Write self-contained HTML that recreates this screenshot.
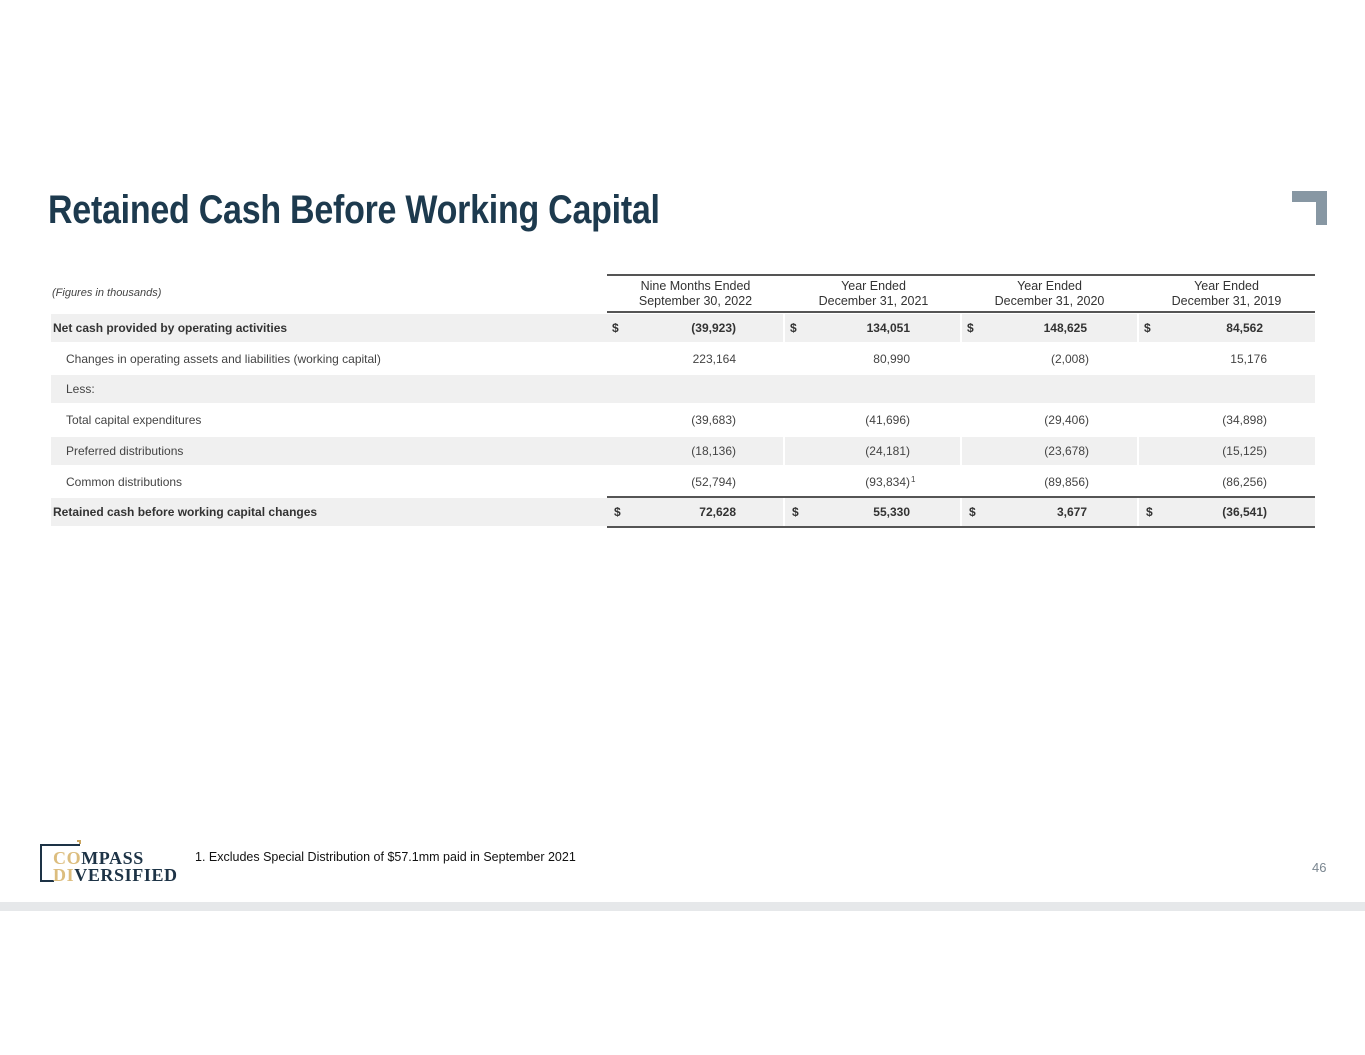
<!DOCTYPE html>
<html><head><meta charset="utf-8"><style>
body{margin:0;width:1365px;height:1055px;background:#fff;position:relative;overflow:hidden;font-family:"Liberation Sans",sans-serif;}
.a{position:absolute;}
.title{left:48px;top:188px;font-weight:bold;font-size:40px;color:#1d3a4e;letter-spacing:-0.3px;white-space:nowrap;transform:scaleX(0.85);transform-origin:0 0;}
.row{position:absolute;left:51px;width:1264px;height:28px;}
.sh .c{background:#f0f0f0;}
.c{position:absolute;top:0;height:28px;line-height:28px;font-size:12px;color:#444;}
.lab{left:0;width:554px;}
.v{text-align:right;box-sizing:border-box;}
.b{font-weight:bold;color:#333;}
.d{position:absolute;left:5px;}
.hd{position:absolute;top:279px;text-align:center;font-size:12.5px;color:#333;line-height:15px;width:177px;}
</style></head><body>
<div class="a title">Retained Cash Before Working Capital</div>
<div class="a" style="left:1292px;top:191px;width:35px;height:11px;background:#8797a3"></div>
<div class="a" style="left:1316px;top:191px;width:11px;height:34px;background:#8797a3"></div>

<div class="a" style="left:607px;top:274px;width:708px;height:1.5px;background:#555"></div>
<div class="a" style="left:52px;top:287px;font-size:11px;font-style:italic;color:#444">(Figures in thousands)</div>
<div class="hd" style="left:607px">Nine Months Ended<br>September 30, 2022</div>
<div class="hd" style="left:785px">Year Ended<br>December 31, 2021</div>
<div class="hd" style="left:961px">Year Ended<br>December 31, 2020</div>
<div class="hd" style="left:1138px">Year Ended<br>December 31, 2019</div>
<div class="a" style="left:607px;top:311px;width:708px;height:1.5px;background:#555"></div>

<div class="row sh" style="top:314px">
<div class="c lab b" style="padding-left:2px">Net cash provided by operating activities</div>
<div class="c v b" style="left:556px;width:176px;padding-right:47px"><span class="d">$</span>(39,923)</div>
<div class="c v b" style="left:734px;width:175px;padding-right:50px"><span class="d">$</span>134,051</div>
<div class="c v b" style="left:911px;width:175px;padding-right:50px"><span class="d">$</span>148,625</div>
<div class="c v b" style="left:1088px;width:176px;padding-right:52px"><span class="d">$</span>84,562</div>
</div>
<div class="row" style="top:345px">
<div class="c lab" style="padding-left:15px">Changes in operating assets and liabilities (working capital)</div>
<div class="c v" style="left:556px;width:176px;padding-right:47px">223,164</div>
<div class="c v" style="left:734px;width:175px;padding-right:50px">80,990</div>
<div class="c v" style="left:911px;width:175px;padding-right:48px">(2,008)</div>
<div class="c v" style="left:1088px;width:176px;padding-right:48px">15,176</div>
</div>
<div class="row sh" style="top:375px">
<div class="c lab" style="padding-left:15px">Less:</div>
<div class="c" style="left:556px;width:708px"></div>
</div>
<div class="row" style="top:406px">
<div class="c lab" style="padding-left:15px">Total capital expenditures</div>
<div class="c v" style="left:556px;width:176px;padding-right:47px">(39,683)</div>
<div class="c v" style="left:734px;width:175px;padding-right:50px">(41,696)</div>
<div class="c v" style="left:911px;width:175px;padding-right:48px">(29,406)</div>
<div class="c v" style="left:1088px;width:176px;padding-right:48px">(34,898)</div>
</div>
<div class="row sh" style="top:437px">
<div class="c lab" style="padding-left:15px">Preferred distributions</div>
<div class="c v" style="left:556px;width:176px;padding-right:47px">(18,136)</div>
<div class="c v" style="left:734px;width:175px;padding-right:50px">(24,181)</div>
<div class="c v" style="left:911px;width:175px;padding-right:48px">(23,678)</div>
<div class="c v" style="left:1088px;width:176px;padding-right:48px">(15,125)</div>
</div>
<div class="row" style="top:468px">
<div class="c lab" style="padding-left:15px">Common distributions</div>
<div class="c v" style="left:556px;width:176px;padding-right:47px">(52,794)</div>
<div class="c v" style="left:734px;width:175px;padding-right:50px">(93,834)<span style="position:absolute;font-size:8px;line-height:8px;top:8px;margin-left:1px">1</span></div>
<div class="c v" style="left:911px;width:175px;padding-right:48px">(89,856)</div>
<div class="c v" style="left:1088px;width:176px;padding-right:48px">(86,256)</div>
</div>
<div class="a" style="left:607px;top:496px;width:708px;height:1.5px;background:#555"></div>
<div class="row sh" style="top:498px">
<div class="c lab b" style="padding-left:2px">Retained cash before working capital changes</div>
<div class="c v b" style="left:556px;width:176px;padding-right:47px"><span class="d" style="left:7px">$</span>72,628</div>
<div class="c v b" style="left:734px;width:175px;padding-right:50px"><span class="d" style="left:7px">$</span>55,330</div>
<div class="c v b" style="left:911px;width:175px;padding-right:50px"><span class="d" style="left:7px">$</span>3,677</div>
<div class="c v b" style="left:1088px;width:176px;padding-right:48px"><span class="d" style="left:7px">$</span>(36,541)</div>
</div>
<div class="a" style="left:607px;top:526px;width:708px;height:1.5px;background:#555"></div>

<div class="a" style="left:40px;top:844px;width:2px;height:38px;background:#1d3346"></div>
<div class="a" style="left:40px;top:844px;width:40px;height:2px;background:#1d3346"></div>
<div class="a" style="left:40px;top:880px;width:14px;height:2px;background:#1d3346"></div>
<div class="a" style="left:77px;top:840px;width:4px;height:2px;background:#c9a560"></div>
<div class="a" style="left:79px;top:840px;width:2px;height:4px;background:#c9a560"></div>
<div class="a" style="left:53px;top:849px;font-family:'Liberation Serif',serif;font-weight:bold;font-size:18px;line-height:18px;color:#1d3346;letter-spacing:0.6px"><span style="color:#dcbd7e">CO</span>MPASS</div>
<div class="a" style="left:53px;top:866px;font-family:'Liberation Serif',serif;font-weight:bold;font-size:18px;line-height:18px;color:#1d3346;letter-spacing:0.6px"><span style="color:#dcbd7e">DI</span>VERSIFIED</div>

<div class="a" style="left:195px;top:850px;font-size:12.5px;color:#111">1. Excludes Special Distribution of $57.1mm paid in September 2021</div>
<div class="a" style="left:1312px;top:860px;font-size:13px;color:#7a8690">46</div>
<div class="a" style="left:0;top:902px;width:1365px;height:9px;background:#e6e8ea"></div>
</body></html>
